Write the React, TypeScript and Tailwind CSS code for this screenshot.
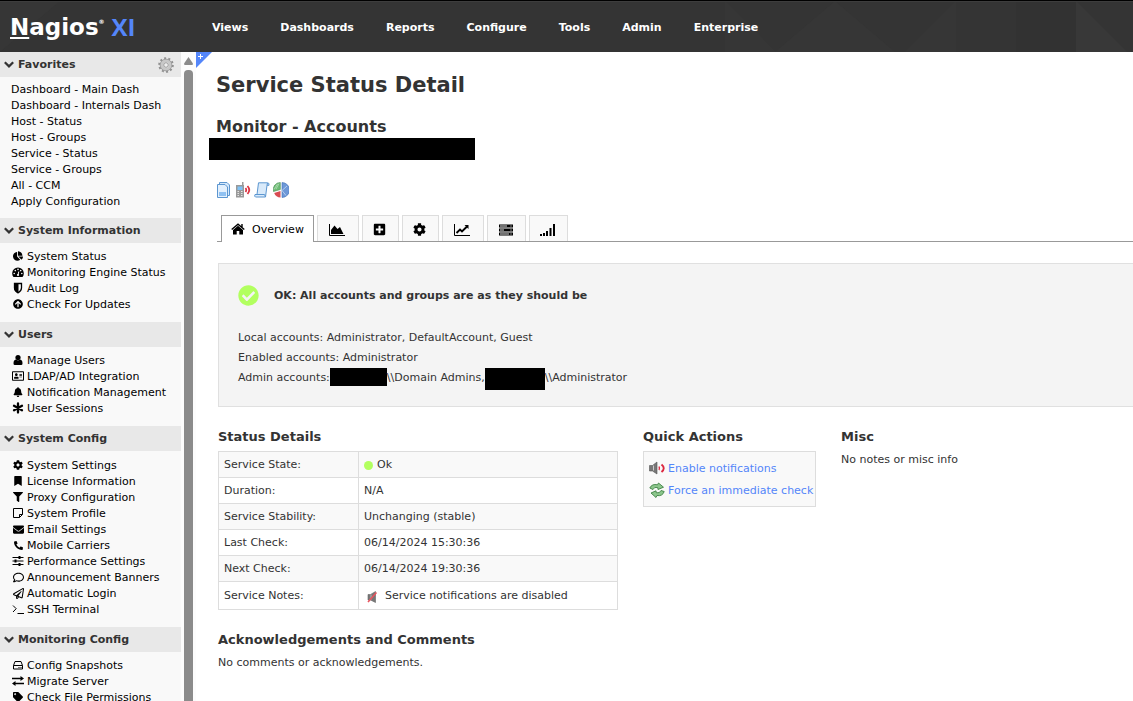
import React from "react";
import {
  FaChartPie, FaArrowCircleUp, FaRegAddressCard, FaBell, FaCog,
  FaBookmark, FaFilter, FaEnvelope, FaPhoneAlt, FaRegComment, FaRegPaperPlane,
  FaTag, FaPlusSquare, FaCheckCircle,
} from "react-icons/fa";

const Svg = ({ children, className = "" }: { children: React.ReactNode; className?: string }) => (
  <svg viewBox="0 0 16 16" className={"size-4 shrink-0 " + className} fill="none" aria-hidden="true">{children}</svg>
);

const Small = ({ children }: { children: React.ReactNode }) => (
  <svg viewBox="0 0 12 12" className="size-3 shrink-0" fill="none" stroke="currentColor" aria-hidden="true">{children}</svg>
);

const Chevron = () => (
  <svg viewBox="0 0 10 7" className="h-[7px] w-[10px] shrink-0" fill="none" stroke="#333" strokeWidth="2.2" aria-hidden="true">
    <path d="M.8 1.200 5 5.400 9.200 1.200" />
  </svg>
);

const Gauge = () => (
  <Small>
    <path d="M1.500 11A5.800 5.800 0 1 1 10.500 11Z" fill="currentColor" stroke="none" />
    <g fill="#f9f9f9" stroke="none">
      <circle cx="2.200" cy="7.500" r=".8" /><circle cx="3.300" cy="4.600" r=".8" /><circle cx="6" cy="3.400" r=".8" />
      <circle cx="8.700" cy="4.600" r=".8" /><circle cx="9.800" cy="7.500" r=".8" />
    </g>
    <path d="M6 9 6.800 5.500" stroke="#f9f9f9" /><circle cx="6" cy="9" r="1.100" fill="#f9f9f9" stroke="none" />
  </Small>
);
const Shield = () => (
  <Small><path d="M2.500 1.500h7V6q0 3-3.500 4.800Q2.500 9 2.500 6Z" strokeWidth="1.300" /><path d="M2.500 1.500H6v9.300Q2.500 9 2.500 6Z" fill="currentColor" /></Small>
);
const Person = () => (
  <Small>
    <g fill="currentColor" stroke="none"><circle cx="6" cy="3.600" r="2.600" /><path d="M3.800 5.600Q6 7.200 8.200 5.600 10.500 6 10.500 9.500 10.500 11 9.200 11H2.800Q1.500 11 1.500 9.500 1.500 6 3.800 5.600Z" /></g>
  </Small>
);
const Asterisk = () => (
  <Small><path d="M6 1.500v9M2 3.700l8 4.600M10 3.700 2 8.300" strokeWidth="2.300" strokeLinecap="round" /></Small>
);
const Note = () => <Small><path d="M1.500 1.500h9v6l-3 3h-6zM7.500 10.500v-3h3" /></Small>;
const Sliders = () => (
  <Small><path d="M.5 2.500h11M.5 6h11M.5 9.500h11" /><path d="M7.500 1v3M3.500 4.500v3M7.500 8v3" strokeWidth="2" /></Small>
);
const Prompt = () => <Small><path d="M1 2.500 4.200 5.700 1 9M5.500 10.500H12" /></Small>;
const Drive = () => <Small><path d="M1.500 6.500 3 2.500h6l1.500 4v3.500h-9ZM1.500 6.500h9M6.500 8.500h1M8.500 8.500h1" /></Small>;
const Exchange = () => (
  <Small>
    <path d="M0 3.500h9M3 8.500h9" strokeWidth="1.500" />
    <path d="M8.500 1 12 3.500 8.500 6ZM3.500 6 0 8.500 3.500 11Z" fill="currentColor" stroke="none" />
  </Small>
);

const House = () => (
  <svg viewBox="0 0 14 12" className="h-3 w-[14px]" aria-hidden="true">
    <path d="M7 2.800 12 7v4.500H8.300V8H5.700v3.500H2V7Z" fill="currentColor" />
    <path d="M.7 6.500 7 1.200 13.300 6.500M11 1v3" fill="none" stroke="currentColor" strokeWidth="1.400" />
  </svg>
);
const AreaChart = () => (
  <svg viewBox="0 0 16 12" className="h-3 w-4" aria-hidden="true">
    <path d="M.5 0v11.500H16" fill="none" stroke="currentColor" />
    <path d="M2 10V6l3.500-4.500L8.500 5 11 3l3.500 7Z" fill="currentColor" />
  </svg>
);
const LineChart = () => (
  <svg viewBox="0 0 16 12" className="h-3 w-4" aria-hidden="true">
    <path d="M.5 0v11.500H16" fill="none" stroke="currentColor" />
    <path d="M2.500 9 6 5.500l2 2L13 2.500" fill="none" stroke="currentColor" strokeWidth="1.900" />
    <path d="M10.500 1H14.500V5Z" fill="currentColor" />
  </svg>
);
const Servers = () => (
  <svg viewBox="0 0 14 12" className="h-3 w-[14px]" aria-hidden="true">
    <path d="M0 .5h14v3H0zM0 4.500h14v3H0zM0 8.500h14v3H0z" fill="currentColor" />
    <path d="M1 2h7M1 6h4M1 10h9" stroke="#f9f9f9" strokeWidth=".9" />
    <path d="M11.500 2h1M11.500 6h1M11.500 10h1" stroke="#f9f9f9" />
  </svg>
);
const Bars = () => (
  <svg viewBox="0 0 15 12" className="h-3 w-[15px]" aria-hidden="true">
    <path d="M0 10h2v2H0zM3 9h2v3H3zM6 7h2v5H6zM9.500 4h2v8h-2zM13 0h2v12h-2z" fill="currentColor" />
  </svg>
);

type Item = [string, React.ReactNode?];

const sections: { title: string; items: Item[]; pad: string }[] = [
  {
    title: "Favorites",
    pad: "pt-[5px] pb-2",
    items: [
      ["Dashboard - Main Dash"], ["Dashboard - Internals Dash"], ["Host - Status"], ["Host - Groups"],
      ["Service - Status"], ["Service - Groups"], ["All - CCM"], ["Apply Configuration"],
    ],
  },
  {
    title: "System Information",
    pad: "pt-[5px] pb-[10px]",
    items: [
      ["System Status", <FaChartPie />],
      ["Monitoring Engine Status", <Gauge />],
      ["Audit Log", <Shield />],
      ["Check For Updates", <FaArrowCircleUp />],
    ],
  },
  {
    title: "Users",
    pad: "pt-[5px] pb-[10px]",
    items: [
      ["Manage Users", <Person />],
      ["LDAP/AD Integration", <FaRegAddressCard className="size-3" />],
      ["Notification Management", <FaBell />],
      ["User Sessions", <Asterisk />],
    ],
  },
  {
    title: "System Config",
    pad: "pt-[6px] pb-[10px]",
    items: [
      ["System Settings", <FaCog />],
      ["License Information", <FaBookmark />],
      ["Proxy Configuration", <FaFilter />],
      ["System Profile", <Note />],
      ["Email Settings", <FaEnvelope className="size-[11px]" />],
      ["Mobile Carriers", <FaPhoneAlt className="size-[9px] -scale-x-100 rotate-90" />],
      ["Performance Settings", <Sliders />],
      ["Announcement Banners", <FaRegComment className="size-[11px]" />],
      ["Automatic Login", <FaRegPaperPlane className="size-[11px]" />],
      ["SSH Terminal", <Prompt />],
    ],
  },
  {
    title: "Monitoring Config",
    pad: "pt-[5px] pb-[10px]",
    items: [
      ["Config Snapshots", <Drive />],
      ["Migrate Server", <Exchange />],
      ["Check File Permissions", <FaTag />],
    ],
  },
];

const tabs: [string, React.ReactNode][] = [
  ["Performance Graphs", <AreaChart />],
  ["Advanced", <FaPlusSquare />],
  ["Configure", <FaCog />],
  ["Capacity Planning", <LineChart />],
  ["Host Details", <Servers />],
  ["Bandwidth", <Bars />],
];

function Gear() {
  return (
    <Svg>
      <circle cx="8" cy="8" r="6.700" stroke="#8f8f8f" strokeWidth="2.200" strokeDasharray="2 2.210" />
      <circle cx="8" cy="8" r="4.400" stroke="#c8c8c8" strokeWidth="3" />
      <circle cx="8" cy="8" r="5.900" stroke="#969696" strokeWidth=".8" />
      <circle cx="8" cy="8" r="2.300" fill="#eee" stroke="#8a8a8a" strokeWidth=".8" />
    </Svg>
  );
}

function Header() {
  return (
    <header className="relative flex h-[52px] shrink-0 items-center border-t border-black bg-[#343434] text-white">
      <svg className="absolute inset-0 h-full w-full" viewBox="0 0 1133 51" preserveAspectRatio="none" aria-hidden="true">
        <path d="M0 0H60L0 51ZM725 0l51 51H725ZM835 0l60 51H775ZM956 0v51H905Z" fill="#363636" />
        <path d="M1016 0h60v51h-60Z" fill="#323232" />
        <path d="M1076 0l51 51h-51Z" fill="#383838" />
        <path d="M0 .5H1133" stroke="#3d3d3d" />
      </svg>
      <a href="#home" aria-label="Nagios XI" className="relative flex w-[202px] shrink-0 items-center pl-[10px] font-bold">
        <span className="text-[23px] leading-[30px]"><span className="underline decoration-2 underline-offset-2">N</span>agios</span>
        <span className="self-start pt-1.5 text-[6px] leading-[8px]">®</span>
        <span className="pl-[7px] font-['Open_Sans',sans-serif] text-[24px] leading-[30px] text-[#5486fa]">XI</span>
      </a>
      <nav className="relative flex pt-[3px] text-[11px] font-bold">
        {["Views", "Dashboards", "Reports", "Configure", "Tools", "Admin", "Enterprise"].map((t) => (
          <a key={t} href={"#" + t} className="px-4 whitespace-nowrap first:pl-[10px]">{t}</a>
        ))}
      </nav>
    </header>
  );
}

function Sidebar() {
  return (
    <aside className="w-[181px] shrink-0 overflow-hidden bg-[#f9f9f9] text-black">
      {sections.map((s, i) => (
        <section key={s.title}>
          <h2 className="flex h-[25px] items-center gap-1 bg-[#e8e8e8] pr-[7px] pl-1 text-[11px] font-bold text-[#333]">
            <Chevron />
            <span className="flex-1 pt-0.5">{s.title}</span>
            {i === 0 && <button type="button" aria-label="Edit favorites"><Gear /></button>}
          </h2>
          <ul className={s.pad + " pl-[11px]"}>
            {s.items.map(([label, icon]) => (
              <li key={label} className="h-4">
                <a href="#item" className="flex h-4 items-center gap-0.5 leading-4 whitespace-nowrap">
                  {icon && <span className="flex w-[14px] justify-center text-[10px]">{icon}</span>}
                  <span className={icon ? "pt-0.5" : ""}>{label}</span>
                </a>
              </li>
            ))}
          </ul>
        </section>
      ))}
    </aside>
  );
}

function Scrollbar() {
  return (
    <div className="flex w-[15px] shrink-0 flex-col items-center bg-[#fcfcfc] pt-[5px]">
      <svg viewBox="0 0 9 8" className="mb-[5px] h-2 w-[9px] shrink-0" aria-hidden="true"><path d="M4.500 0 9 6.500Q9 8 8 8H1Q0 8 0 6.500Z" fill="#8b8b8b" /></svg>
      <div className="w-[9px] flex-1 rounded-t-[4px] bg-[#8b8b8b]" />
    </div>
  );
}

function ActionIcons() {
  return (
    <div className="mt-[22px] ml-[7px] flex gap-[3px]">
      <a href="#all" aria-label="View current status">
        <Svg>
          <path d="M3.500.5h7.500l2.500 2.500v10.500h-10z" fill="#d5e8fb" stroke="#5c96d0" />
          <path d="M1.500 2.500h7.500l2.500 2.500v10.500h-10z" fill="#e3f0fd" stroke="#5c96d0" />
          <path d="M3 10h7v4H3z" fill="#8fc1f2" />
        </Svg>
      </a>
      <a href="#notifications" aria-label="View notifications">
        <Svg>
          <path d="M7 0h1.500v3H9v12.500H1V3h6z" fill="#999" />
          <path d="M2.500 4.500h5V8h-5z" fill="#7ec2f7" />
          <path d="M2.500 9.500H4M6 9.500h1.500M2.500 11.500H4M6 11.500h1.500M2.500 13.500H4M6 13.500h1.500" stroke="#e4e4e4" />
          <path d="M10.500 6q1.500 2 0 4M12.500 4q3.500 4 0 8" stroke="#dd3543" strokeWidth="1.800" />
        </Svg>
      </a>
      <a href="#history" aria-label="View history">
        <Svg>
          <path d="M4.500.8h9q2 0 1.500 2.500h-2L11.500 15h-10q-1.500-.5-.5-2.500h2Z" fill="#d9eafa" stroke="#5c96d0" />
          <path d="M3 12.500h7.500L11.500 15M13 3.300 13.500 1" stroke="#5c96d0" />
        </Svg>
      </a>
      <a href="#availability" aria-label="View availability">
        <Svg>
          <path d="M7.300 7.500V.5A7 7 0 0 0 .5 9.500Z" fill="#6fbd76" stroke="#468c50" strokeWidth=".6" />
          <path d="M3 7 6 1.500M1 7.500 4.500 2" stroke="#b5ddb8" strokeWidth=".8" />
          <path d="M7.500 9v6.500A7 7 0 0 1 1.200 11Z" fill="#d94b52" />
          <path d="M9 .5a7.500 7.500 0 0 1 0 15V8.500Z" fill="#6d98d8" stroke="#3e6fb5" strokeWidth=".6" />
          <path d="M9 8.500 14 4M9 8.500l4 5" stroke="#b4cdef" />
        </Svg>
      </a>
    </div>
  );
}

function Tabs() {
  return (
    <div role="tablist" className="mt-[17px] ml-2 flex h-[27px] border-b border-[#999] pl-1">
      <button type="button" role="tab" aria-selected="true" className="-mb-px flex h-[27px] w-[93px] items-center justify-center gap-[7px] border border-b-0 border-[#999] bg-white text-black">
        <House /><span className="pt-0.5">Overview</span>
      </button>
      {tabs.map(([label, icon], i) => (
        <button key={label} type="button" role="tab" aria-selected="false" aria-label={label}
          className={(i === 0 || i === 3 ? "w-[42px] pr-0.5" : i < 3 ? "w-[37px] pr-0.5" : "w-[39px] pr-0.5") + " ml-[3px] flex h-[26px] items-center justify-center border border-b-0 border-[#ddd] bg-[#f9f9f9] pt-0.5 text-[13px] text-black"}>
          {icon}
        </button>
      ))}
    </div>
  );
}

const Speaker = () => (
  <Svg>
    <path d="M.5 5.500h3l4.500-3.500v12L3.500 11h-3z" fill="#777" stroke="#555" strokeWidth=".6" />
    <path d="M4.500 5.500v5" stroke="#ccc" />
    <path d="M10 6.500q1 2 0 3.500" stroke="#dc2840" strokeWidth="1.400" />
    <path d="M12.500 4.500q4.500 3.700 0 7.500" stroke="#dc2840" strokeWidth="1.900" />
  </Svg>
);

const Muted = () => (
  <Svg>
    <path d="M4 5.500h2.500L11.500 2.500v11L6.500 11H4z" fill="#777" stroke="#666" strokeWidth=".6" />
    <path d="M7 5.500v5" stroke="#bbb" />
    <path d="m4 13 8.500-9.500" stroke="#e8545e" strokeWidth="1.600" />
  </Svg>
);

const Recycle = () => (
  <Svg>
    <path d="M.8 6Q3 1.500 8.500 2.800L9.500 1l5 4.200L9 7.500l-.3-2Q5 4.600 4 7.500Z" fill="#8cc68c" stroke="#3f8245" strokeWidth=".9" />
    <path d="M15.200 9.500q-1.700 5-7.200 4L7 15.500 2 11l5-2.200.3 2q3.700.7 4.700-2.300Z" fill="#8cc68c" stroke="#3f8245" strokeWidth=".9" />
  </Svg>
);

const rows: [string, React.ReactNode][] = [
  ["Service State:", <span className="flex items-center gap-1"><span className="size-[9px] rounded-full bg-[#b2ff5f]" />Ok</span>],
  ["Duration:", "N/A"],
  ["Service Stability:", "Unchanging (stable)"],
  ["Last Check:", "06/14/2024 15:30:36"],
  ["Next Check:", "06/14/2024 19:30:36"],
  ["Service Notes:", <span className="flex items-center gap-[5px]"><Muted />Service notifications are disabled</span>],
];

const heading = "text-[13px] leading-[18px] font-bold";

export default function App() {
  return (
    <div className="flex h-screen flex-col overflow-hidden bg-white font-[Verdana,'DejaVu_Sans',sans-serif] text-[11px] text-[#333]">
      <Header />
      <div className="flex min-h-0 flex-1">
        <Sidebar />
        <Scrollbar />
        <main className="relative min-w-0 flex-1 overflow-hidden pl-[13px]">
          <button type="button" aria-label="Add to favorites" className="absolute top-0 left-0">
            <svg viewBox="0 0 16 16" className="size-4"><path d="M0 0h16L0 16Z" fill="#5486fa" /><path d="M2 4.500h5M4.500 2v5" stroke="#fff" /></svg>
          </button>
          <h1 className="mt-[18px] ml-[7px] text-[21px] leading-[30px] font-bold">Service Status Detail</h1>
          <h2 className="mt-[17px] ml-[7px] text-[16px] leading-[20px] font-bold">Monitor - Accounts</h2>
          <div className="mt-px h-[22px] w-[266px] bg-black" />
          <ActionIcons />
          <Tabs />
          <section className="mt-[21px] ml-[9px] h-[144px] border border-r-0 border-[#e0e0e0] bg-[#f4f4f4] px-[19px] pt-[21px]">
            <div className="flex items-center gap-[15px]">
              <FaCheckCircle className="size-[21px] text-[#b2ff5f]" />
              <strong className="pt-0.5">OK: All accounts and groups are as they should be</strong>
            </div>
            <div className="mt-[22px] leading-5">
              <p>Local accounts: Administrator, DefaultAccount, Guest</p>
              <p>Enabled accounts: Administrator</p>
              <p className="flex h-5">
                Admin accounts:
                <span className="h-[18px] w-[57px] bg-black" />
                {"\\\\Domain Admins,"}
                <span className="h-[22px] w-[60px] bg-black" />
                {"\\\\Administrator"}
              </p>
            </div>
          </section>
          <div className="mt-[21px] ml-[9px] flex items-start">
            <div className="w-[400px] shrink-0">
              <h3 className={heading}>Status Details</h3>
              <table className="mt-[5px] w-full border-collapse">
                <tbody>
                  {rows.map(([k, v]) => (
                    <tr key={k} className="h-[26px] odd:bg-[#f9f9f9] last:h-7">
                      <th scope="row" className="w-[140px] border border-[#ddd] px-[5px] pt-0.5 text-left font-normal">{k}</th>
                      <td className="border border-[#ddd] px-[5px] pt-0.5">{v}</td>
                    </tr>
                  ))}
                </tbody>
              </table>
              <h3 className={heading + " mt-[21px]"}>Acknowledgements and Comments</h3>
              <p className="mt-1.5 leading-4">No comments or acknowledgements.</p>
            </div>
            <div className="ml-[25px] w-[173px] shrink-0">
              <h3 className={heading}>Quick Actions</h3>
              <ul className="mt-[5px] flex h-14 flex-col justify-center border border-[#ddd] bg-[#f9f9f9] pl-[5px] text-[#5486fa]">
                <li><a href="#enable" className="flex h-[22px] items-center gap-[3px] whitespace-nowrap"><Speaker /><span className="pt-0.5">Enable notifications</span></a></li>
                <li><a href="#force" className="flex h-[22px] items-center gap-[3px] whitespace-nowrap"><Recycle /><span className="pt-0.5">Force an immediate check</span></a></li>
              </ul>
            </div>
            <div className="ml-[25px]">
              <h3 className={heading}>Misc</h3>
              <p className="mt-1.5 leading-4">No notes or misc info</p>
            </div>
          </div>
        </main>
      </div>
    </div>
  );
}
